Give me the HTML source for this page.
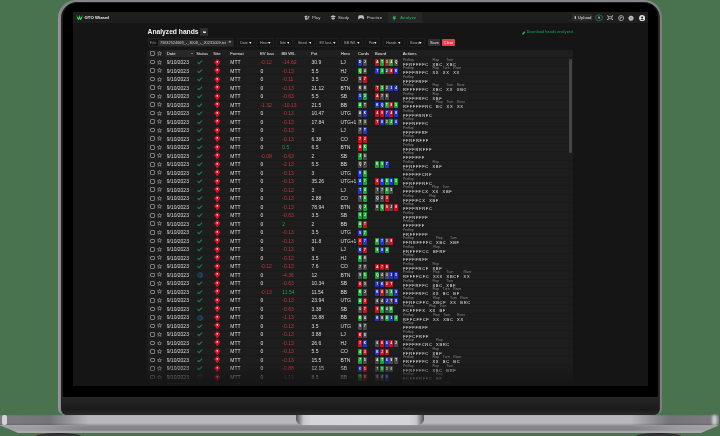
<!DOCTYPE html>
<html><head><meta charset="utf-8">
<style>
*{margin:0;padding:0;box-sizing:border-box}
html,body{width:720px;height:436px;overflow:hidden;background:#49734f;font-family:"Liberation Sans",sans-serif}
.abs{position:absolute}
#lid{position:absolute;left:58px;top:0;width:604px;height:414.8px;border-radius:18px 18px 7px 7px;background:linear-gradient(90deg,#9a9aa0,#86868a 3px,#86868a 600px,#7c7c80)}
#lid2{position:absolute;left:61px;top:1.8px;width:599.2px;height:413px;border-radius:16px 16px 6px 6px;background:linear-gradient(90deg,#242424,#1c1c1c 2px,#1c1c1c 596px,#303030)}
#lid3{position:absolute;left:62.8px;top:3.4px;width:594.9px;height:394px;border-radius:14px 14px 0 0;background:#000}
#chin{position:absolute;left:62px;top:397.2px;width:596.5px;height:17.4px;border-radius:0 0 6px 6px;background:linear-gradient(#262626,#1b1b1b 70%,#2a2a2a)}
#base{position:absolute;left:0;top:414.5px;width:719px;height:18.9px;clip-path:polygon(0 0,100% 0,100% 10.5px,699px 19.2px,20px 19.2px,0 10.5px);background:linear-gradient(#a2a2a6 0,#b6b6ba 1px,#b9b9bd 8px,#8a8a8e 11px,#828286 15px,#a6a6aa 16.5px,#a8a8ac 18.5px,#6a6a6e 19.2px)}
#baseshadeL{position:absolute;left:0;top:414.8px;width:95px;height:10.5px;background:linear-gradient(90deg,rgba(50,50,54,0.45),rgba(50,50,54,0.5) 50px,rgba(50,50,54,0) 88px)}
#baseshadeR{position:absolute;left:624px;top:414.8px;width:95px;height:10.5px;background:linear-gradient(270deg,rgba(50,50,54,0.45),rgba(50,50,54,0.5) 50px,rgba(50,50,54,0) 88px)}
#baseliteL{position:absolute;left:0;top:425px;width:90px;height:8.4px;background:linear-gradient(90deg,rgba(175,175,179,0.7),rgba(175,175,179,0.55) 40px,rgba(175,175,179,0) 85px);clip-path:polygon(0 0,100% 0,100% 100%,20px 100%,0 0.5px)}
#baseliteR{position:absolute;left:629px;top:425px;width:90px;height:8.4px;background:linear-gradient(270deg,rgba(175,175,179,0.7),rgba(175,175,179,0.55) 40px,rgba(175,175,179,0) 85px);clip-path:polygon(0 0,100% 0.5px,70px 100%,0 100%)}
#hlL{position:absolute;left:1.5px;top:415.2px;width:5.5px;height:10.2px;background:#d4d4d8;border-radius:2px;filter:blur(0.7px)}
#hlR{position:absolute;left:712.4px;top:415.2px;width:5px;height:9.5px;background:#cacace;border-radius:2px;filter:blur(0.8px)}
#notch{position:absolute;left:295.6px;top:414.5px;width:128.8px;height:10.7px;border-radius:0 0 6px 6px;background:linear-gradient(90deg,#505054,#c8c9cf 6%,#d4d5db 12%,#d6d7dd 50%,#d4d5db 88%,#c8c9cf 94%,#505054)}
#footL{position:absolute;left:36px;top:433.2px;width:45px;height:6px;background:linear-gradient(#262628,#48484a);border-radius:50%/3px}
#footR{position:absolute;left:636px;top:433.2px;width:45px;height:6px;background:linear-gradient(#262628,#48484a);border-radius:50%/3px}
#screen{position:absolute;left:73.2px;top:12.2px;width:575px;height:373.5px;background:#151515;overflow:hidden}
/* everything inside screen uses page coords minus (73.2,12.2) via wrapper */
#pg{position:absolute;left:-73.2px;top:-12.2px;width:720px;height:436px;will-change:transform;filter:blur(0.22px)}
#nav{position:absolute;left:73.2px;top:12.2px;width:575px;height:10.4px;background:#1e1e1e}
.nt{position:absolute;font-size:4.3px;color:#c8c8c8;line-height:1;white-space:nowrap}
.t{position:absolute;font-size:5px;line-height:8.5px;color:#dcdcdc;white-space:nowrap;top:0.2px}
#table{position:absolute;left:147px;top:49.5px;width:426px;height:340px;background:#1d1d1d}
#thead{position:absolute;left:147px;top:49.5px;width:426px;height:8.45px;background:#1f1f1f;border-bottom:0.5px solid #2a2a2a}
.th{position:absolute;font-size:4.2px;line-height:8.45px;color:#f0f0f0;top:0.7px;white-space:nowrap}
.row{position:absolute;left:147px;width:426px;height:8.508px}
.row:before{content:"";position:absolute;left:0;top:-0.5px;width:100%;height:1px;background:#1a1a1a}
.cb{position:absolute;left:2.9px;top:1.9px;width:4.8px;height:4.6px;border:1px solid #7e7e7e;border-radius:1px}
.st{position:absolute;left:10.2px;top:1.8px;width:5px;height:4.8px}
.dt{left:19.7px}
.ck{position:absolute;left:50px;top:2.1px;width:5.5px;height:4.6px}
.ps{position:absolute;left:66.8px;top:0.75px;width:6.6px;height:7px}
.fm{left:83.3px}
.ev{left:113.4px}
.bb{left:135.3px}
.pot{left:164.5px}
.hero{left:193.6px;letter-spacing:-0.12px}
.neg{color:#bd3a3e}
.pos{color:#1f9a5a}
.zero{color:#e6e6e6}
.cd{position:absolute;width:4.1px;height:6.6px;border-radius:0.7px;font-size:3px;line-height:6.6px;text-align:center;color:#fff;font-weight:bold}
.acts{position:absolute;left:256px;top:0.8px;height:8.5px;display:flex;gap:3.6px}
.ag{display:flex;flex-direction:column}
.al{font-size:3.4px;line-height:3.9px;color:#8a8a8a;margin-top:-0.1px}
.av{font-size:4px;line-height:4.2px;color:#f0f0f0;font-weight:normal;letter-spacing:0.68px}
.fb{position:absolute;top:38.3px;height:8.4px;border:0.5px solid #1e1e1e;border-radius:1px;white-space:nowrap}
.fb span{position:absolute;left:2.5px;top:2.8px;font-size:3.55px;line-height:1;color:#b0b0b0}
.fb svg{position:absolute;right:2.6px;top:3.0px;width:2.6px;height:1.9px}
#fade{position:absolute;left:147px;top:364px;width:426px;height:22px;background:linear-gradient(rgba(22,22,22,0),rgba(22,22,22,0.62) 12.5px,rgba(22,22,22,1) 21px)}
</style></head><body>
<div id="lid"></div><div id="lid2"></div><div id="lid3"></div><div id="chin"></div>
<div id="base"></div><div id="baseshadeL"></div><div id="baseshadeR"></div><div id="baseliteL"></div><div id="baseliteR"></div><div id="hlL"></div><div id="hlR"></div><div id="notch"></div>
<div id="footL"></div><div id="footR"></div>
<div id="screen"><div id="pg">
<div id="nav"></div>
<div class="abs" style="left:571.9px;top:14.4px;width:20px;height:6.8px;background:#2a2a2a;border-radius:1px"></div>
<div class="abs" style="left:387.8px;top:12.2px;width:34px;height:10.4px;background:#262626"></div>
<svg class="abs" style="left:75.9px;top:14.9px;width:7.2px;height:5.1px" viewBox="0 0 14 10"><path d="M1 1 L4.5 9 M13 1 L9.5 9" fill="none" stroke="#1d7050" stroke-width="2.2"/><path d="M2.8 4 L5 9 L7 3.2 L9 9 L11.2 4" fill="none" stroke="#36d05e" stroke-width="2"/></svg>
<div class="nt" style="left:84.5px;top:15.6px;font-weight:bold;color:#e8e8e8">GTO Wizard</div>


<svg class="abs" style="left:303.9px;top:15px;width:6.2px;height:5.2px" viewBox="0 0 12 10"><path d="M1 2.2 L5.6 0.8 L7.4 8.6 L2.8 9.6 Z" fill="#bdbdbd"/><path d="M7.2 1.2 L10.8 2.4 L8.6 9 L7.9 5.5 Z" fill="#9a9a9a"/><circle cx="4.3" cy="5.2" r="1" fill="#1e1e1e"/></svg>
<svg class="abs" style="left:329.7px;top:15px;width:6.3px;height:5.2px" viewBox="0 0 12 10"><path d="M6 0.5 L11.5 3 L6 5.5 L0.5 3 Z" fill="#bdbdbd"/><path d="M2.8 4.6 L2.8 7.8 Q6 10 9.2 7.8 L9.2 4.6 L6 6.2 Z" fill="#bdbdbd"/></svg>
<svg class="abs" style="left:358.3px;top:15.4px;width:6.1px;height:4.6px" viewBox="0 0 12 9"><path d="M3 0.5 H9 Q11.3 0.5 11.6 3.5 L11.8 7.2 Q11.6 8.6 10.3 8.2 L8.2 6.4 H3.8 L1.7 8.2 Q0.4 8.6 0.2 7.2 L0.4 3.5 Q0.7 0.5 3 0.5 Z" fill="#bdbdbd"/></svg>
<svg class="abs" style="left:392px;top:14.6px;width:4.8px;height:6px" viewBox="0 0 8 10"><path d="M1.5 0.5 L3.8 2.8 L6.5 1.2 L5.2 4.5 L7.2 6.2 L4.3 6.5 L3.6 9.5 L2.6 6.2 L0.5 5.2 L2.5 3.8 Z" fill="#22c55e"/><rect x="2.2" y="7.6" width="1.6" height="1.6" fill="#2b46c8"/></svg>
<svg class="abs" style="left:573.7px;top:16.2px;width:2.6px;height:3px" viewBox="0 0 4 5"><path d="M2 0 L4 2.2 H2.8 V5 H1.2 V2.2 H0 Z" fill="#e0e0e0"/></svg>
<svg class="abs" style="left:595px;top:14.1px;width:8px;height:7.6px" viewBox="0 0 16 15"><path d="M8 1 L14.3 4.3 L14.3 10.7 L8 14 L1.7 10.7 L1.7 4.3 Z" fill="none" stroke="#1f8a5a" stroke-width="1.5"/><rect x="6.9" y="5" width="2.2" height="4.2" fill="#e8e8e8"/></svg>
<svg class="abs" style="left:606.7px;top:14.9px;width:6.2px;height:5.4px" viewBox="0 0 12 10"><path d="M3 3 L9 3 L9 7 L3 7 Z M3 3 L1 1 M9 3 L11 1 M9 7 L11 9 M3 7 L1 9" fill="none" stroke="#bdbdbd" stroke-width="1.4"/><circle cx="1.5" cy="1.5" r="1.3" fill="#bdbdbd"/><circle cx="10.5" cy="1.5" r="1.3" fill="#bdbdbd"/><circle cx="10.5" cy="8.5" r="1.3" fill="#bdbdbd"/><circle cx="1.5" cy="8.5" r="1.3" fill="#bdbdbd"/></svg>
<svg class="abs" style="left:617.5px;top:14.5px;width:6.2px;height:6.2px" viewBox="0 0 12 12"><circle cx="6" cy="6" r="5" fill="none" stroke="#bdbdbd" stroke-width="1.4"/><rect x="3.6" y="3.4" width="1.6" height="5" fill="#bdbdbd"/><rect x="6.4" y="3.4" width="2" height="2.6" fill="#bdbdbd"/></svg>
<svg class="abs" style="left:628.3px;top:14.5px;width:6px;height:6.2px" viewBox="0 0 12 12"><path d="M6 0.5 L7.3 2 L9.4 1.6 L9.8 3.7 L11.6 4.8 L10.6 6.6 L11.3 8.6 L9.3 9.2 L8.6 11.2 L6.6 10.6 L6 11.6 L4.6 10.6 L2.6 11 L2.3 9 L0.4 8 L1.4 6.2 L0.6 4.2 L2.6 3.5 L3.2 1.4 L5 2 Z" fill="#bdbdbd"/><circle cx="6" cy="6" r="1.3" fill="#5a5a5a"/></svg>
<svg class="abs" style="left:638.75px;top:14.5px;width:6.3px;height:6.3px" viewBox="0 0 12 12"><circle cx="6" cy="6" r="5.8" fill="#e0e0e0"/><circle cx="6" cy="4.6" r="1.9" fill="#1e1e1e"/><path d="M2.6 9.6 Q6 5.8 9.4 9.6 Z" fill="#1e1e1e"/></svg>
<div class="nt" style="left:312px;top:15.6px">Play</div>
<div class="nt" style="left:338px;top:15.6px">Study</div>
<div class="nt" style="left:366.7px;top:15.6px">Practice</div>
<div class="nt" style="left:400px;top:15.6px;color:#1f9a58;font-weight:bold">Analyze</div>

<div class="nt" style="left:578px;top:15.7px;font-size:4px;color:#bcbcbc;font-weight:bold">Upload</div>

<div class="abs" style="left:147.6px;top:28.7px;font-size:6.7px;font-weight:bold;color:#f2f2f2;white-space:nowrap;line-height:1">Analyzed hands</div>
<div class="abs" style="left:199.9px;top:28.1px;width:8.3px;height:7.6px;background:#2e2e2e;border-radius:1.2px"></div>
<svg class="abs" style="left:202.6px;top:30.8px;width:3px;height:2.3px" viewBox="0 0 6 5"><path d="M0 0.3 H2.4 L3 1 H6 V5 H0 Z" fill="#e6e6e6"/></svg>

<div class="abs" style="left:147.6px;top:38.2px;width:86.4px;height:8.8px;border:0.5px solid #222;border-radius:1px"></div>
<div class="abs" style="left:149.8px;top:40.8px;font-size:3.9px;color:#8c8c8c;line-height:1">File</div>
<div class="abs" style="left:157.6px;top:39.6px;width:75.3px;height:6.1px;background:#2b2b2b;border-radius:1px;font-size:3.88px;line-height:6.3px;color:#cfcfcf;padding-left:2.3px;white-space:nowrap">73632524668_-_3008_-_20231009.txt</div>
<div class="abs" style="left:228.6px;top:40.3px;font-size:4.4px;line-height:1;color:#d8d8d8;font-weight:bold">&times;</div>
<div class="fb" style="left:236.7px;width:18.7px"><span>Date</span><svg viewBox="0 0 4 3"><path d="M0 0H4L2 3Z" fill="#e4e4e4"/></svg></div>
<div class="fb" style="left:256.4px;width:18px"><span>Hero</span><svg viewBox="0 0 4 3"><path d="M0 0H4L2 3Z" fill="#e4e4e4"/></svg></div>
<div class="fb" style="left:276.3px;width:16.6px"><span>Site</span><svg viewBox="0 0 4 3"><path d="M0 0H4L2 3Z" fill="#e4e4e4"/></svg></div>
<div class="fb" style="left:294.4px;width:20.6px"><span>Street</span><svg viewBox="0 0 4 3"><path d="M0 0H4L2 3Z" fill="#e4e4e4"/></svg></div>
<div class="fb" style="left:316px;width:23.4px"><span>EV loss</span><svg viewBox="0 0 4 3"><path d="M0 0H4L2 3Z" fill="#e4e4e4"/></svg></div>
<div class="fb" style="left:340.8px;width:22.6px"><span>BB W/L</span><svg viewBox="0 0 4 3"><path d="M0 0H4L2 3Z" fill="#e4e4e4"/></svg></div>
<div class="fb" style="left:365.2px;width:15.2px"><span>Pot</span><svg viewBox="0 0 4 3"><path d="M0 0H4L2 3Z" fill="#e4e4e4"/></svg></div>
<div class="fb" style="left:382.8px;width:21.8px"><span>Hands</span><svg viewBox="0 0 4 3"><path d="M0 0H4L2 3Z" fill="#e4e4e4"/></svg></div>
<div class="fb" style="left:406.8px;width:18.6px"><span>Board</span><svg viewBox="0 0 4 3"><path d="M0 0H4L2 3Z" fill="#e4e4e4"/></svg></div>
<div class="abs" style="left:428.3px;top:39.3px;width:12.2px;height:7.2px;background:#303030;border-radius:1px;font-size:3.9px;line-height:7.2px;color:#e0e0e0;text-align:center">Save</div>
<div class="abs" style="left:442px;top:39.3px;width:13px;height:7.2px;background:#e0414b;border-radius:1px;font-size:3.9px;line-height:7.2px;color:#fde;text-align:center">Clear</div>

<svg class="abs" style="left:521.6px;top:31px;width:3.6px;height:3.8px" viewBox="0 0 6 6"><path d="M3.8 0.3 L5.7 2.2 L2.2 5.7 L0.3 5.7 L0.3 3.8 Z" fill="#22b35e"/></svg>
<div class="abs" style="left:526.7px;top:31.3px;font-size:3.7px;line-height:1;color:#1b8450;font-weight:bold;white-space:nowrap">Download hands analyzed</div>

<div id="table"></div>
<div id="thead">
<div class="cb"></div>
<svg class="st" viewBox="0 0 24 23"><path d="M12 1.8 L14.8 8.3 L22 8.8 L16.5 13.4 L18.3 20.6 L12 16.7 L5.7 20.6 L7.5 13.4 L2 8.8 L9.2 8.3 Z" fill="none" stroke="#a0a0a0" stroke-width="3.2" stroke-linejoin="round"/></svg>
<div class="abs" style="left:18px;top:0;width:30px;height:8.45px;background:#282828"></div>
<div class="th" style="left:19.7px">Date</div><div class="abs" style="left:44px;top:3.9px;border-left:1px solid transparent;border-right:1px solid transparent;border-top:1.2px solid #ccc"></div>
<div class="th" style="left:49.3px">Status</div>
<div class="th" style="left:66.3px">Site</div>
<div class="th" style="left:83.3px">Format</div>
<div class="th" style="left:112.9px">EV loss</div>
<div class="th" style="left:134.4px">BB W/L</div>
<div class="th" style="left:164px">Pot</div>
<div class="th" style="left:193.8px">Hero</div>
<div class="th" style="left:211px">Cards</div>
<div class="th" style="left:228px">Board</div>
<div class="th" style="left:255.8px">Actions</div>
</div>
<div class="row" style="top:57.95px"><div class="cb"></div><svg class="st" viewBox="0 0 24 23"><path d="M12 1.8 L14.8 8.3 L22 8.8 L16.5 13.4 L18.3 20.6 L12 16.7 L5.7 20.6 L7.5 13.4 L2 8.8 L9.2 8.3 Z" fill="none" stroke="#a0a0a0" stroke-width="3.2" stroke-linejoin="round"/></svg><div class="t dt">9/10/2023</div><svg class="ck" viewBox="0 0 6 5"><path d="M0.5 2.4 L2.2 4.1 L5.5 0.6" fill="none" stroke="#1b7a50" stroke-width="1.3"/></svg><svg class="ps" viewBox="0 0 13 14"><path d="M6.5 0.2 Q9.5 3 12.6 5.6 Q13 6.4 12.2 7.2 Q9.6 9.6 7.6 13.4 Q6.5 14.2 5.4 13.4 Q3.4 9.6 0.8 7.2 Q0 6.4 0.4 5.6 Q3.5 3 6.5 0.2 Z" fill="#e3102a"/><circle cx="6.4" cy="5.6" r="1.7" fill="#f4e8ea"/></svg><div class="t fm">MTT</div><div class="t ev neg">-0.12</div><div class="t bb neg">-14.62</div><div class="t pot">30.9</div><div class="t hero">LJ</div><div class="cd" style="left:211.10px;top:1.40px;background:#2434c8">D</div><div class="cd" style="left:215.85px;top:1.40px;background:#4a4a4a">J</div><div class="cd" style="left:228.30px;top:1.40px;background:#c8141f">A</div><div class="cd" style="left:233.00px;top:1.40px;background:#17a336">T</div><div class="cd" style="left:237.70px;top:1.40px;background:#c8141f">3</div><div class="cd" style="left:242.40px;top:1.40px;background:#17a336">4</div><div class="cd" style="left:247.10px;top:1.40px;background:#4a4a4a">Q</div><div class="acts"><div class="ag"><div class="al">Preflop</div><div class="av">FFRFFFFC</div></div><div class="ag"><div class="al">Flop</div><div class="av">XBC</div></div><div class="ag"><div class="al">Turn</div><div class="av">XBC</div></div></div></div>
<div class="row" style="top:66.46px"><div class="cb"></div><svg class="st" viewBox="0 0 24 23"><path d="M12 1.8 L14.8 8.3 L22 8.8 L16.5 13.4 L18.3 20.6 L12 16.7 L5.7 20.6 L7.5 13.4 L2 8.8 L9.2 8.3 Z" fill="none" stroke="#a0a0a0" stroke-width="3.2" stroke-linejoin="round"/></svg><div class="t dt">9/10/2023</div><svg class="ck" viewBox="0 0 6 5"><path d="M0.5 2.4 L2.2 4.1 L5.5 0.6" fill="none" stroke="#1b7a50" stroke-width="1.3"/></svg><svg class="ps" viewBox="0 0 13 14"><path d="M6.5 0.2 Q9.5 3 12.6 5.6 Q13 6.4 12.2 7.2 Q9.6 9.6 7.6 13.4 Q6.5 14.2 5.4 13.4 Q3.4 9.6 0.8 7.2 Q0 6.4 0.4 5.6 Q3.5 3 6.5 0.2 Z" fill="#e3102a"/><circle cx="6.4" cy="5.6" r="1.7" fill="#f4e8ea"/></svg><div class="t fm">MTT</div><div class="t ev zero">0</div><div class="t bb neg">-0.13</div><div class="t pot">5.5</div><div class="t hero">HJ</div><div class="cd" style="left:211.10px;top:1.40px;background:#17a336">Q</div><div class="cd" style="left:215.85px;top:1.40px;background:#4a4a4a">4</div><div class="cd" style="left:228.30px;top:1.40px;background:#2434c8">T</div><div class="cd" style="left:233.00px;top:1.40px;background:#17a336">3</div><div class="cd" style="left:237.70px;top:1.40px;background:#4a4a4a">2</div><div class="cd" style="left:242.40px;top:1.40px;background:#c8141f">8</div><div class="cd" style="left:247.10px;top:1.40px;background:#2434c8">K</div><div class="acts"><div class="ag"><div class="al">Preflop</div><div class="av">FFFFRFFC</div></div><div class="ag"><div class="al">Flop</div><div class="av">XX</div></div><div class="ag"><div class="al">Turn</div><div class="av">XX</div></div><div class="ag"><div class="al">River</div><div class="av">XX</div></div></div></div>
<div class="row" style="top:74.97px"><div class="cb"></div><svg class="st" viewBox="0 0 24 23"><path d="M12 1.8 L14.8 8.3 L22 8.8 L16.5 13.4 L18.3 20.6 L12 16.7 L5.7 20.6 L7.5 13.4 L2 8.8 L9.2 8.3 Z" fill="none" stroke="#a0a0a0" stroke-width="3.2" stroke-linejoin="round"/></svg><div class="t dt">9/10/2023</div><svg class="ck" viewBox="0 0 6 5"><path d="M0.5 2.4 L2.2 4.1 L5.5 0.6" fill="none" stroke="#1b7a50" stroke-width="1.3"/></svg><svg class="ps" viewBox="0 0 13 14"><path d="M6.5 0.2 Q9.5 3 12.6 5.6 Q13 6.4 12.2 7.2 Q9.6 9.6 7.6 13.4 Q6.5 14.2 5.4 13.4 Q3.4 9.6 0.8 7.2 Q0 6.4 0.4 5.6 Q3.5 3 6.5 0.2 Z" fill="#e3102a"/><circle cx="6.4" cy="5.6" r="1.7" fill="#f4e8ea"/></svg><div class="t fm">MTT</div><div class="t ev zero">0</div><div class="t bb neg">-0.11</div><div class="t pot">3.5</div><div class="t hero">CO</div><div class="cd" style="left:211.10px;top:1.40px;background:#4a4a4a">5</div><div class="cd" style="left:215.85px;top:1.40px;background:#c8141f">7</div><div class="acts"><div class="ag"><div class="al">Preflop</div><div class="av">FFFFFRFF</div></div></div></div>
<div class="row" style="top:83.47px"><div class="cb"></div><svg class="st" viewBox="0 0 24 23"><path d="M12 1.8 L14.8 8.3 L22 8.8 L16.5 13.4 L18.3 20.6 L12 16.7 L5.7 20.6 L7.5 13.4 L2 8.8 L9.2 8.3 Z" fill="none" stroke="#a0a0a0" stroke-width="3.2" stroke-linejoin="round"/></svg><div class="t dt">9/10/2023</div><svg class="ck" viewBox="0 0 6 5"><path d="M0.5 2.4 L2.2 4.1 L5.5 0.6" fill="none" stroke="#1b7a50" stroke-width="1.3"/></svg><svg class="ps" viewBox="0 0 13 14"><path d="M6.5 0.2 Q9.5 3 12.6 5.6 Q13 6.4 12.2 7.2 Q9.6 9.6 7.6 13.4 Q6.5 14.2 5.4 13.4 Q3.4 9.6 0.8 7.2 Q0 6.4 0.4 5.6 Q3.5 3 6.5 0.2 Z" fill="#e3102a"/><circle cx="6.4" cy="5.6" r="1.7" fill="#f4e8ea"/></svg><div class="t fm">MTT</div><div class="t ev zero">0</div><div class="t bb neg">-0.13</div><div class="t pot">21.12</div><div class="t hero">BTN</div><div class="cd" style="left:211.10px;top:1.40px;background:#4a4a4a">K</div><div class="cd" style="left:215.85px;top:1.40px;background:#4a4a4a">8</div><div class="cd" style="left:228.30px;top:1.40px;background:#c8141f">T</div><div class="cd" style="left:233.00px;top:1.40px;background:#17a336">3</div><div class="cd" style="left:237.70px;top:1.40px;background:#4a4a4a">2</div><div class="cd" style="left:242.40px;top:1.40px;background:#2434c8">3</div><div class="cd" style="left:247.10px;top:1.40px;background:#2434c8">4</div><div class="acts"><div class="ag"><div class="al">Preflop</div><div class="av">RFFFFFFC</div></div><div class="ag"><div class="al">Flop</div><div class="av">XBC</div></div><div class="ag"><div class="al">Turn</div><div class="av">XX</div></div><div class="ag"><div class="al">River</div><div class="av">XBC</div></div></div></div>
<div class="row" style="top:91.98px"><div class="cb"></div><svg class="st" viewBox="0 0 24 23"><path d="M12 1.8 L14.8 8.3 L22 8.8 L16.5 13.4 L18.3 20.6 L12 16.7 L5.7 20.6 L7.5 13.4 L2 8.8 L9.2 8.3 Z" fill="none" stroke="#a0a0a0" stroke-width="3.2" stroke-linejoin="round"/></svg><div class="t dt">9/10/2023</div><svg class="ck" viewBox="0 0 6 5"><path d="M0.5 2.4 L2.2 4.1 L5.5 0.6" fill="none" stroke="#1b7a50" stroke-width="1.3"/></svg><svg class="ps" viewBox="0 0 13 14"><path d="M6.5 0.2 Q9.5 3 12.6 5.6 Q13 6.4 12.2 7.2 Q9.6 9.6 7.6 13.4 Q6.5 14.2 5.4 13.4 Q3.4 9.6 0.8 7.2 Q0 6.4 0.4 5.6 Q3.5 3 6.5 0.2 Z" fill="#e3102a"/><circle cx="6.4" cy="5.6" r="1.7" fill="#f4e8ea"/></svg><div class="t fm">MTT</div><div class="t ev zero">0</div><div class="t bb neg">-0.63</div><div class="t pot">5.5</div><div class="t hero">SB</div><div class="cd" style="left:211.10px;top:1.40px;background:#2434c8">5</div><div class="cd" style="left:215.85px;top:1.40px;background:#17a336">3</div><div class="cd" style="left:228.30px;top:1.40px;background:#c8141f">A</div><div class="cd" style="left:233.00px;top:1.40px;background:#4a4a4a">7</div><div class="cd" style="left:237.70px;top:1.40px;background:#4a4a4a">6</div><div class="acts"><div class="ag"><div class="al">Preflop</div><div class="av">FFFFFRFC</div></div><div class="ag"><div class="al">Flop</div><div class="av">XBF</div></div></div></div>
<div class="row" style="top:100.49px"><div class="cb"></div><svg class="st" viewBox="0 0 24 23"><path d="M12 1.8 L14.8 8.3 L22 8.8 L16.5 13.4 L18.3 20.6 L12 16.7 L5.7 20.6 L7.5 13.4 L2 8.8 L9.2 8.3 Z" fill="none" stroke="#a0a0a0" stroke-width="3.2" stroke-linejoin="round"/></svg><div class="t dt">9/10/2023</div><svg class="ck" viewBox="0 0 6 5"><path d="M0.5 2.4 L2.2 4.1 L5.5 0.6" fill="none" stroke="#1b7a50" stroke-width="1.3"/></svg><svg class="ps" viewBox="0 0 13 14"><path d="M6.5 0.2 Q9.5 3 12.6 5.6 Q13 6.4 12.2 7.2 Q9.6 9.6 7.6 13.4 Q6.5 14.2 5.4 13.4 Q3.4 9.6 0.8 7.2 Q0 6.4 0.4 5.6 Q3.5 3 6.5 0.2 Z" fill="#e3102a"/><circle cx="6.4" cy="5.6" r="1.7" fill="#f4e8ea"/></svg><div class="t fm">MTT</div><div class="t ev neg">-1.32</div><div class="t bb neg">-10.13</div><div class="t pot">21.5</div><div class="t hero">BB</div><div class="cd" style="left:211.10px;top:1.40px;background:#17a336">A</div><div class="cd" style="left:215.85px;top:1.40px;background:#4a4a4a">T</div><div class="cd" style="left:228.30px;top:1.40px;background:#2434c8">K</div><div class="cd" style="left:233.00px;top:1.40px;background:#2434c8">Q</div><div class="cd" style="left:237.70px;top:1.40px;background:#17a336">T</div><div class="cd" style="left:242.40px;top:1.40px;background:#c8141f">8</div><div class="cd" style="left:247.10px;top:1.40px;background:#17a336">5</div><div class="acts"><div class="ag"><div class="al">Preflop</div><div class="av">RFFFFFFRC</div></div><div class="ag"><div class="al">Flop</div><div class="av">BC</div></div><div class="ag"><div class="al">Turn</div><div class="av">XX</div></div><div class="ag"><div class="al">River</div><div class="av">XX</div></div></div></div>
<div class="row" style="top:109.00px"><div class="cb"></div><svg class="st" viewBox="0 0 24 23"><path d="M12 1.8 L14.8 8.3 L22 8.8 L16.5 13.4 L18.3 20.6 L12 16.7 L5.7 20.6 L7.5 13.4 L2 8.8 L9.2 8.3 Z" fill="none" stroke="#a0a0a0" stroke-width="3.2" stroke-linejoin="round"/></svg><div class="t dt">9/10/2023</div><svg class="ck" viewBox="0 0 6 5"><path d="M0.5 2.4 L2.2 4.1 L5.5 0.6" fill="none" stroke="#1b7a50" stroke-width="1.3"/></svg><svg class="ps" viewBox="0 0 13 14"><path d="M6.5 0.2 Q9.5 3 12.6 5.6 Q13 6.4 12.2 7.2 Q9.6 9.6 7.6 13.4 Q6.5 14.2 5.4 13.4 Q3.4 9.6 0.8 7.2 Q0 6.4 0.4 5.6 Q3.5 3 6.5 0.2 Z" fill="#e3102a"/><circle cx="6.4" cy="5.6" r="1.7" fill="#f4e8ea"/></svg><div class="t fm">MTT</div><div class="t ev zero">0</div><div class="t bb neg">-0.13</div><div class="t pot">10.47</div><div class="t hero">UTG</div><div class="cd" style="left:211.10px;top:1.40px;background:#4a4a4a">A</div><div class="cd" style="left:215.85px;top:1.40px;background:#2434c8">K</div><div class="cd" style="left:228.30px;top:1.40px;background:#c8141f">4</div><div class="cd" style="left:233.00px;top:1.40px;background:#c8141f">9</div><div class="cd" style="left:237.70px;top:1.40px;background:#2434c8">7</div><div class="cd" style="left:242.40px;top:1.40px;background:#c8141f">4</div><div class="cd" style="left:247.10px;top:1.40px;background:#2434c8">8</div><div class="acts"><div class="ag"><div class="al">Preflop</div><div class="av">FFFFFRRFC</div></div></div></div>
<div class="row" style="top:117.51px"><div class="cb"></div><svg class="st" viewBox="0 0 24 23"><path d="M12 1.8 L14.8 8.3 L22 8.8 L16.5 13.4 L18.3 20.6 L12 16.7 L5.7 20.6 L7.5 13.4 L2 8.8 L9.2 8.3 Z" fill="none" stroke="#a0a0a0" stroke-width="3.2" stroke-linejoin="round"/></svg><div class="t dt">9/10/2023</div><svg class="ck" viewBox="0 0 6 5"><path d="M0.5 2.4 L2.2 4.1 L5.5 0.6" fill="none" stroke="#1b7a50" stroke-width="1.3"/></svg><svg class="ps" viewBox="0 0 13 14"><path d="M6.5 0.2 Q9.5 3 12.6 5.6 Q13 6.4 12.2 7.2 Q9.6 9.6 7.6 13.4 Q6.5 14.2 5.4 13.4 Q3.4 9.6 0.8 7.2 Q0 6.4 0.4 5.6 Q3.5 3 6.5 0.2 Z" fill="#e3102a"/><circle cx="6.4" cy="5.6" r="1.7" fill="#f4e8ea"/></svg><div class="t fm">MTT</div><div class="t ev zero">0</div><div class="t bb neg">-0.13</div><div class="t pot">17.84</div><div class="t hero">UTG+1</div><div class="cd" style="left:211.10px;top:1.40px;background:#4a4a4a">T</div><div class="cd" style="left:215.85px;top:1.40px;background:#4a4a4a">3</div><div class="cd" style="left:228.30px;top:1.40px;background:#c8141f">T</div><div class="cd" style="left:233.00px;top:1.40px;background:#2434c8">8</div><div class="cd" style="left:237.70px;top:1.40px;background:#4a4a4a">2</div><div class="cd" style="left:242.40px;top:1.40px;background:#17a336">J</div><div class="cd" style="left:247.10px;top:1.40px;background:#2434c8">6</div><div class="acts"><div class="ag"><div class="al">Preflop</div><div class="av">FFFRFFFC</div></div></div></div>
<div class="row" style="top:126.01px"><div class="cb"></div><svg class="st" viewBox="0 0 24 23"><path d="M12 1.8 L14.8 8.3 L22 8.8 L16.5 13.4 L18.3 20.6 L12 16.7 L5.7 20.6 L7.5 13.4 L2 8.8 L9.2 8.3 Z" fill="none" stroke="#a0a0a0" stroke-width="3.2" stroke-linejoin="round"/></svg><div class="t dt">9/10/2023</div><svg class="ck" viewBox="0 0 6 5"><path d="M0.5 2.4 L2.2 4.1 L5.5 0.6" fill="none" stroke="#1b7a50" stroke-width="1.3"/></svg><svg class="ps" viewBox="0 0 13 14"><path d="M6.5 0.2 Q9.5 3 12.6 5.6 Q13 6.4 12.2 7.2 Q9.6 9.6 7.6 13.4 Q6.5 14.2 5.4 13.4 Q3.4 9.6 0.8 7.2 Q0 6.4 0.4 5.6 Q3.5 3 6.5 0.2 Z" fill="#e3102a"/><circle cx="6.4" cy="5.6" r="1.7" fill="#f4e8ea"/></svg><div class="t fm">MTT</div><div class="t ev zero">0</div><div class="t bb neg">-0.13</div><div class="t pot">3</div><div class="t hero">LJ</div><div class="cd" style="left:211.10px;top:1.40px;background:#4a4a4a">7</div><div class="cd" style="left:215.85px;top:1.40px;background:#2434c8">T</div><div class="acts"><div class="ag"><div class="al">Preflop</div><div class="av">FFFFFFRF</div></div></div></div>
<div class="row" style="top:134.52px"><div class="cb"></div><svg class="st" viewBox="0 0 24 23"><path d="M12 1.8 L14.8 8.3 L22 8.8 L16.5 13.4 L18.3 20.6 L12 16.7 L5.7 20.6 L7.5 13.4 L2 8.8 L9.2 8.3 Z" fill="none" stroke="#a0a0a0" stroke-width="3.2" stroke-linejoin="round"/></svg><div class="t dt">9/10/2023</div><svg class="ck" viewBox="0 0 6 5"><path d="M0.5 2.4 L2.2 4.1 L5.5 0.6" fill="none" stroke="#1b7a50" stroke-width="1.3"/></svg><svg class="ps" viewBox="0 0 13 14"><path d="M6.5 0.2 Q9.5 3 12.6 5.6 Q13 6.4 12.2 7.2 Q9.6 9.6 7.6 13.4 Q6.5 14.2 5.4 13.4 Q3.4 9.6 0.8 7.2 Q0 6.4 0.4 5.6 Q3.5 3 6.5 0.2 Z" fill="#e3102a"/><circle cx="6.4" cy="5.6" r="1.7" fill="#f4e8ea"/></svg><div class="t fm">MTT</div><div class="t ev zero">0</div><div class="t bb neg">-0.13</div><div class="t pot">6.38</div><div class="t hero">CO</div><div class="cd" style="left:211.10px;top:1.40px;background:#c8141f">7</div><div class="cd" style="left:215.85px;top:1.40px;background:#c8141f">2</div><div class="acts"><div class="ag"><div class="al">Preflop</div><div class="av">FFRFRFFF</div></div></div></div>
<div class="row" style="top:143.03px"><div class="cb"></div><svg class="st" viewBox="0 0 24 23"><path d="M12 1.8 L14.8 8.3 L22 8.8 L16.5 13.4 L18.3 20.6 L12 16.7 L5.7 20.6 L7.5 13.4 L2 8.8 L9.2 8.3 Z" fill="none" stroke="#a0a0a0" stroke-width="3.2" stroke-linejoin="round"/></svg><div class="t dt">9/10/2023</div><svg class="ck" viewBox="0 0 6 5"><path d="M0.5 2.4 L2.2 4.1 L5.5 0.6" fill="none" stroke="#1b7a50" stroke-width="1.3"/></svg><svg class="ps" viewBox="0 0 13 14"><path d="M6.5 0.2 Q9.5 3 12.6 5.6 Q13 6.4 12.2 7.2 Q9.6 9.6 7.6 13.4 Q6.5 14.2 5.4 13.4 Q3.4 9.6 0.8 7.2 Q0 6.4 0.4 5.6 Q3.5 3 6.5 0.2 Z" fill="#e3102a"/><circle cx="6.4" cy="5.6" r="1.7" fill="#f4e8ea"/></svg><div class="t fm">MTT</div><div class="t ev zero">0</div><div class="t bb pos">0.5</div><div class="t pot">6.5</div><div class="t hero">BTN</div><div class="cd" style="left:211.10px;top:1.40px;background:#c8141f">A</div><div class="cd" style="left:215.85px;top:1.40px;background:#17a336">K</div><div class="acts"><div class="ag"><div class="al">Preflop</div><div class="av">FFFFRRFFF</div></div></div></div>
<div class="row" style="top:151.54px"><div class="cb"></div><svg class="st" viewBox="0 0 24 23"><path d="M12 1.8 L14.8 8.3 L22 8.8 L16.5 13.4 L18.3 20.6 L12 16.7 L5.7 20.6 L7.5 13.4 L2 8.8 L9.2 8.3 Z" fill="none" stroke="#a0a0a0" stroke-width="3.2" stroke-linejoin="round"/></svg><div class="t dt">9/10/2023</div><svg class="ck" viewBox="0 0 6 5"><path d="M0.5 2.4 L2.2 4.1 L5.5 0.6" fill="none" stroke="#1b7a50" stroke-width="1.3"/></svg><svg class="ps" viewBox="0 0 13 14"><path d="M6.5 0.2 Q9.5 3 12.6 5.6 Q13 6.4 12.2 7.2 Q9.6 9.6 7.6 13.4 Q6.5 14.2 5.4 13.4 Q3.4 9.6 0.8 7.2 Q0 6.4 0.4 5.6 Q3.5 3 6.5 0.2 Z" fill="#e3102a"/><circle cx="6.4" cy="5.6" r="1.7" fill="#f4e8ea"/></svg><div class="t fm">MTT</div><div class="t ev neg">-0.08</div><div class="t bb neg">-0.63</div><div class="t pot">2</div><div class="t hero">SB</div><div class="cd" style="left:211.10px;top:1.40px;background:#17a336">J</div><div class="cd" style="left:215.85px;top:1.40px;background:#4a4a4a">6</div><div class="acts"><div class="ag"><div class="al">Preflop</div><div class="av">FFFFFFF</div></div></div></div>
<div class="row" style="top:160.05px"><div class="cb"></div><svg class="st" viewBox="0 0 24 23"><path d="M12 1.8 L14.8 8.3 L22 8.8 L16.5 13.4 L18.3 20.6 L12 16.7 L5.7 20.6 L7.5 13.4 L2 8.8 L9.2 8.3 Z" fill="none" stroke="#a0a0a0" stroke-width="3.2" stroke-linejoin="round"/></svg><div class="t dt">9/10/2023</div><svg class="ck" viewBox="0 0 6 5"><path d="M0.5 2.4 L2.2 4.1 L5.5 0.6" fill="none" stroke="#1b7a50" stroke-width="1.3"/></svg><svg class="ps" viewBox="0 0 13 14"><path d="M6.5 0.2 Q9.5 3 12.6 5.6 Q13 6.4 12.2 7.2 Q9.6 9.6 7.6 13.4 Q6.5 14.2 5.4 13.4 Q3.4 9.6 0.8 7.2 Q0 6.4 0.4 5.6 Q3.5 3 6.5 0.2 Z" fill="#e3102a"/><circle cx="6.4" cy="5.6" r="1.7" fill="#f4e8ea"/></svg><div class="t fm">MTT</div><div class="t ev zero">0</div><div class="t bb neg">-2.13</div><div class="t pot">5.5</div><div class="t hero">BB</div><div class="cd" style="left:211.10px;top:1.40px;background:#4a4a4a">Q</div><div class="cd" style="left:215.85px;top:1.40px;background:#4a4a4a">7</div><div class="cd" style="left:228.30px;top:1.40px;background:#17a336">K</div><div class="cd" style="left:233.00px;top:1.40px;background:#17a336">9</div><div class="cd" style="left:237.70px;top:1.40px;background:#2434c8">7</div><div class="acts"><div class="ag"><div class="al">Preflop</div><div class="av">FFRFFFFC</div></div><div class="ag"><div class="al">Flop</div><div class="av">XBF</div></div></div></div>
<div class="row" style="top:168.55px"><div class="cb"></div><svg class="st" viewBox="0 0 24 23"><path d="M12 1.8 L14.8 8.3 L22 8.8 L16.5 13.4 L18.3 20.6 L12 16.7 L5.7 20.6 L7.5 13.4 L2 8.8 L9.2 8.3 Z" fill="none" stroke="#a0a0a0" stroke-width="3.2" stroke-linejoin="round"/></svg><div class="t dt">9/10/2023</div><svg class="ck" viewBox="0 0 6 5"><path d="M0.5 2.4 L2.2 4.1 L5.5 0.6" fill="none" stroke="#1b7a50" stroke-width="1.3"/></svg><svg class="ps" viewBox="0 0 13 14"><path d="M6.5 0.2 Q9.5 3 12.6 5.6 Q13 6.4 12.2 7.2 Q9.6 9.6 7.6 13.4 Q6.5 14.2 5.4 13.4 Q3.4 9.6 0.8 7.2 Q0 6.4 0.4 5.6 Q3.5 3 6.5 0.2 Z" fill="#e3102a"/><circle cx="6.4" cy="5.6" r="1.7" fill="#f4e8ea"/></svg><div class="t fm">MTT</div><div class="t ev zero">0</div><div class="t bb neg">-0.13</div><div class="t pot">3</div><div class="t hero">UTG</div><div class="cd" style="left:211.10px;top:1.40px;background:#2434c8">8</div><div class="cd" style="left:215.85px;top:1.40px;background:#17a336">6</div><div class="acts"><div class="ag"><div class="al">Preflop</div><div class="av">FFFFFFCRF</div></div></div></div>
<div class="row" style="top:177.06px"><div class="cb"></div><svg class="st" viewBox="0 0 24 23"><path d="M12 1.8 L14.8 8.3 L22 8.8 L16.5 13.4 L18.3 20.6 L12 16.7 L5.7 20.6 L7.5 13.4 L2 8.8 L9.2 8.3 Z" fill="none" stroke="#a0a0a0" stroke-width="3.2" stroke-linejoin="round"/></svg><div class="t dt">9/10/2023</div><svg class="ck" viewBox="0 0 6 5"><path d="M0.5 2.4 L2.2 4.1 L5.5 0.6" fill="none" stroke="#1b7a50" stroke-width="1.3"/></svg><svg class="ps" viewBox="0 0 13 14"><path d="M6.5 0.2 Q9.5 3 12.6 5.6 Q13 6.4 12.2 7.2 Q9.6 9.6 7.6 13.4 Q6.5 14.2 5.4 13.4 Q3.4 9.6 0.8 7.2 Q0 6.4 0.4 5.6 Q3.5 3 6.5 0.2 Z" fill="#e3102a"/><circle cx="6.4" cy="5.6" r="1.7" fill="#f4e8ea"/></svg><div class="t fm">MTT</div><div class="t ev zero">0</div><div class="t bb neg">-0.13</div><div class="t pot">35.26</div><div class="t hero">UTG+1</div><div class="cd" style="left:211.10px;top:1.40px;background:#2434c8">A</div><div class="cd" style="left:215.85px;top:1.40px;background:#17a336">7</div><div class="cd" style="left:228.30px;top:1.40px;background:#c8141f">6</div><div class="cd" style="left:233.00px;top:1.40px;background:#2434c8">8</div><div class="cd" style="left:237.70px;top:1.40px;background:#17a336">8</div><div class="cd" style="left:242.40px;top:1.40px;background:#2434c8">8</div><div class="cd" style="left:247.10px;top:1.40px;background:#17a336">5</div><div class="acts"><div class="ag"><div class="al">Preflop</div><div class="av">FFRFFFRFC</div></div></div></div>
<div class="row" style="top:185.57px"><div class="cb"></div><svg class="st" viewBox="0 0 24 23"><path d="M12 1.8 L14.8 8.3 L22 8.8 L16.5 13.4 L18.3 20.6 L12 16.7 L5.7 20.6 L7.5 13.4 L2 8.8 L9.2 8.3 Z" fill="none" stroke="#a0a0a0" stroke-width="3.2" stroke-linejoin="round"/></svg><div class="t dt">9/10/2023</div><svg class="ck" viewBox="0 0 6 5"><path d="M0.5 2.4 L2.2 4.1 L5.5 0.6" fill="none" stroke="#1b7a50" stroke-width="1.3"/></svg><svg class="ps" viewBox="0 0 13 14"><path d="M6.5 0.2 Q9.5 3 12.6 5.6 Q13 6.4 12.2 7.2 Q9.6 9.6 7.6 13.4 Q6.5 14.2 5.4 13.4 Q3.4 9.6 0.8 7.2 Q0 6.4 0.4 5.6 Q3.5 3 6.5 0.2 Z" fill="#e3102a"/><circle cx="6.4" cy="5.6" r="1.7" fill="#f4e8ea"/></svg><div class="t fm">MTT</div><div class="t ev zero">0</div><div class="t bb neg">-0.12</div><div class="t pot">3</div><div class="t hero">LJ</div><div class="cd" style="left:211.10px;top:1.40px;background:#2434c8">T</div><div class="cd" style="left:215.85px;top:1.40px;background:#17a336">4</div><div class="cd" style="left:228.30px;top:1.40px;background:#4a4a4a">T</div><div class="cd" style="left:233.00px;top:1.40px;background:#4a4a4a">7</div><div class="cd" style="left:237.70px;top:1.40px;background:#17a336">6</div><div class="cd" style="left:242.40px;top:1.40px;background:#4a4a4a">5</div><div class="acts"><div class="ag"><div class="al">Preflop</div><div class="av">FFFFFFCX</div></div><div class="ag"><div class="al">Flop</div><div class="av">XX</div></div><div class="ag"><div class="al">Turn</div><div class="av">XBF</div></div></div></div>
<div class="row" style="top:194.08px"><div class="cb"></div><svg class="st" viewBox="0 0 24 23"><path d="M12 1.8 L14.8 8.3 L22 8.8 L16.5 13.4 L18.3 20.6 L12 16.7 L5.7 20.6 L7.5 13.4 L2 8.8 L9.2 8.3 Z" fill="none" stroke="#a0a0a0" stroke-width="3.2" stroke-linejoin="round"/></svg><div class="t dt">9/10/2023</div><svg class="ck" viewBox="0 0 6 5"><path d="M0.5 2.4 L2.2 4.1 L5.5 0.6" fill="none" stroke="#1b7a50" stroke-width="1.3"/></svg><svg class="ps" viewBox="0 0 13 14"><path d="M6.5 0.2 Q9.5 3 12.6 5.6 Q13 6.4 12.2 7.2 Q9.6 9.6 7.6 13.4 Q6.5 14.2 5.4 13.4 Q3.4 9.6 0.8 7.2 Q0 6.4 0.4 5.6 Q3.5 3 6.5 0.2 Z" fill="#e3102a"/><circle cx="6.4" cy="5.6" r="1.7" fill="#f4e8ea"/></svg><div class="t fm">MTT</div><div class="t ev zero">0</div><div class="t bb neg">-0.13</div><div class="t pot">2.88</div><div class="t hero">CO</div><div class="cd" style="left:211.10px;top:1.40px;background:#4a4a4a">T</div><div class="cd" style="left:215.85px;top:1.40px;background:#17a336">6</div><div class="cd" style="left:228.30px;top:1.40px;background:#4a4a4a">Q</div><div class="cd" style="left:233.00px;top:1.40px;background:#4a4a4a">2</div><div class="cd" style="left:237.70px;top:1.40px;background:#c8141f">3</div><div class="acts"><div class="ag"><div class="al">Preflop</div><div class="av">FFFFFCX</div></div><div class="ag"><div class="al">Flop</div><div class="av">XBF</div></div></div></div>
<div class="row" style="top:202.59px"><div class="cb"></div><svg class="st" viewBox="0 0 24 23"><path d="M12 1.8 L14.8 8.3 L22 8.8 L16.5 13.4 L18.3 20.6 L12 16.7 L5.7 20.6 L7.5 13.4 L2 8.8 L9.2 8.3 Z" fill="none" stroke="#a0a0a0" stroke-width="3.2" stroke-linejoin="round"/></svg><div class="t dt">9/10/2023</div><svg class="ck" viewBox="0 0 6 5"><path d="M0.5 2.4 L2.2 4.1 L5.5 0.6" fill="none" stroke="#1b7a50" stroke-width="1.3"/></svg><svg class="ps" viewBox="0 0 13 14"><path d="M6.5 0.2 Q9.5 3 12.6 5.6 Q13 6.4 12.2 7.2 Q9.6 9.6 7.6 13.4 Q6.5 14.2 5.4 13.4 Q3.4 9.6 0.8 7.2 Q0 6.4 0.4 5.6 Q3.5 3 6.5 0.2 Z" fill="#e3102a"/><circle cx="6.4" cy="5.6" r="1.7" fill="#f4e8ea"/></svg><div class="t fm">MTT</div><div class="t ev zero">0</div><div class="t bb neg">-0.13</div><div class="t pot">78.94</div><div class="t hero">BTN</div><div class="cd" style="left:211.10px;top:1.40px;background:#4a4a4a">Q</div><div class="cd" style="left:215.85px;top:1.40px;background:#17a336">J</div><div class="cd" style="left:228.30px;top:1.40px;background:#4a4a4a">K</div><div class="cd" style="left:233.00px;top:1.40px;background:#17a336">Q</div><div class="cd" style="left:237.70px;top:1.40px;background:#c8141f">9</div><div class="cd" style="left:242.40px;top:1.40px;background:#4a4a4a">J</div><div class="cd" style="left:247.10px;top:1.40px;background:#c8141f">8</div><div class="acts"><div class="ag"><div class="al">Preflop</div><div class="av">FFFFRFRFC</div></div></div></div>
<div class="row" style="top:211.09px"><div class="cb"></div><svg class="st" viewBox="0 0 24 23"><path d="M12 1.8 L14.8 8.3 L22 8.8 L16.5 13.4 L18.3 20.6 L12 16.7 L5.7 20.6 L7.5 13.4 L2 8.8 L9.2 8.3 Z" fill="none" stroke="#a0a0a0" stroke-width="3.2" stroke-linejoin="round"/></svg><div class="t dt">9/10/2023</div><svg class="ck" viewBox="0 0 6 5"><path d="M0.5 2.4 L2.2 4.1 L5.5 0.6" fill="none" stroke="#1b7a50" stroke-width="1.3"/></svg><svg class="ps" viewBox="0 0 13 14"><path d="M6.5 0.2 Q9.5 3 12.6 5.6 Q13 6.4 12.2 7.2 Q9.6 9.6 7.6 13.4 Q6.5 14.2 5.4 13.4 Q3.4 9.6 0.8 7.2 Q0 6.4 0.4 5.6 Q3.5 3 6.5 0.2 Z" fill="#e3102a"/><circle cx="6.4" cy="5.6" r="1.7" fill="#f4e8ea"/></svg><div class="t fm">MTT</div><div class="t ev zero">0</div><div class="t bb neg">-0.63</div><div class="t pot">3.5</div><div class="t hero">SB</div><div class="cd" style="left:211.10px;top:1.40px;background:#17a336">9</div><div class="cd" style="left:215.85px;top:1.40px;background:#17a336">J</div><div class="acts"><div class="ag"><div class="al">Preflop</div><div class="av">FFFRFFFF</div></div></div></div>
<div class="row" style="top:219.60px"><div class="cb"></div><svg class="st" viewBox="0 0 24 23"><path d="M12 1.8 L14.8 8.3 L22 8.8 L16.5 13.4 L18.3 20.6 L12 16.7 L5.7 20.6 L7.5 13.4 L2 8.8 L9.2 8.3 Z" fill="none" stroke="#a0a0a0" stroke-width="3.2" stroke-linejoin="round"/></svg><div class="t dt">9/10/2023</div><svg class="ck" viewBox="0 0 6 5"><path d="M0.5 2.4 L2.2 4.1 L5.5 0.6" fill="none" stroke="#1b7a50" stroke-width="1.3"/></svg><svg class="ps" viewBox="0 0 13 14"><path d="M6.5 0.2 Q9.5 3 12.6 5.6 Q13 6.4 12.2 7.2 Q9.6 9.6 7.6 13.4 Q6.5 14.2 5.4 13.4 Q3.4 9.6 0.8 7.2 Q0 6.4 0.4 5.6 Q3.5 3 6.5 0.2 Z" fill="#e3102a"/><circle cx="6.4" cy="5.6" r="1.7" fill="#f4e8ea"/></svg><div class="t fm">MTT</div><div class="t ev zero">0</div><div class="t bb pos">2</div><div class="t pot">2</div><div class="t hero">BB</div><div class="cd" style="left:211.10px;top:1.40px;background:#17a336">A</div><div class="cd" style="left:215.85px;top:1.40px;background:#c8141f">T</div><div class="acts"><div class="ag"><div class="al">Preflop</div><div class="av">FFFFFFF</div></div></div></div>
<div class="row" style="top:228.11px"><div class="cb"></div><svg class="st" viewBox="0 0 24 23"><path d="M12 1.8 L14.8 8.3 L22 8.8 L16.5 13.4 L18.3 20.6 L12 16.7 L5.7 20.6 L7.5 13.4 L2 8.8 L9.2 8.3 Z" fill="none" stroke="#a0a0a0" stroke-width="3.2" stroke-linejoin="round"/></svg><div class="t dt">9/10/2023</div><svg class="ck" viewBox="0 0 6 5"><path d="M0.5 2.4 L2.2 4.1 L5.5 0.6" fill="none" stroke="#1b7a50" stroke-width="1.3"/></svg><svg class="ps" viewBox="0 0 13 14"><path d="M6.5 0.2 Q9.5 3 12.6 5.6 Q13 6.4 12.2 7.2 Q9.6 9.6 7.6 13.4 Q6.5 14.2 5.4 13.4 Q3.4 9.6 0.8 7.2 Q0 6.4 0.4 5.6 Q3.5 3 6.5 0.2 Z" fill="#e3102a"/><circle cx="6.4" cy="5.6" r="1.7" fill="#f4e8ea"/></svg><div class="t fm">MTT</div><div class="t ev zero">0</div><div class="t bb neg">-0.13</div><div class="t pot">3.5</div><div class="t hero">UTG</div><div class="cd" style="left:211.10px;top:1.40px;background:#2434c8">9</div><div class="cd" style="left:215.85px;top:1.40px;background:#17a336">7</div><div class="acts"><div class="ag"><div class="al">Preflop</div><div class="av">FRFFFFFF</div></div></div></div>
<div class="row" style="top:236.62px"><div class="cb"></div><svg class="st" viewBox="0 0 24 23"><path d="M12 1.8 L14.8 8.3 L22 8.8 L16.5 13.4 L18.3 20.6 L12 16.7 L5.7 20.6 L7.5 13.4 L2 8.8 L9.2 8.3 Z" fill="none" stroke="#a0a0a0" stroke-width="3.2" stroke-linejoin="round"/></svg><div class="t dt">9/10/2023</div><svg class="ck" viewBox="0 0 6 5"><path d="M0.5 2.4 L2.2 4.1 L5.5 0.6" fill="none" stroke="#1b7a50" stroke-width="1.3"/></svg><svg class="ps" viewBox="0 0 13 14"><path d="M6.5 0.2 Q9.5 3 12.6 5.6 Q13 6.4 12.2 7.2 Q9.6 9.6 7.6 13.4 Q6.5 14.2 5.4 13.4 Q3.4 9.6 0.8 7.2 Q0 6.4 0.4 5.6 Q3.5 3 6.5 0.2 Z" fill="#e3102a"/><circle cx="6.4" cy="5.6" r="1.7" fill="#f4e8ea"/></svg><div class="t fm">MTT</div><div class="t ev zero">0</div><div class="t bb neg">-0.13</div><div class="t pot">31.8</div><div class="t hero">UTG+1</div><div class="cd" style="left:211.10px;top:1.40px;background:#c8141f">6</div><div class="cd" style="left:215.85px;top:1.40px;background:#2434c8">7</div><div class="cd" style="left:228.30px;top:1.40px;background:#17a336">K</div><div class="cd" style="left:233.00px;top:1.40px;background:#2434c8">7</div><div class="cd" style="left:237.70px;top:1.40px;background:#4a4a4a">2</div><div class="cd" style="left:242.40px;top:1.40px;background:#c8141f">8</div><div class="acts"><div class="ag"><div class="al">Preflop</div><div class="av">FFRRFFFFC</div></div><div class="ag"><div class="al">Flop</div><div class="av">XBC</div></div><div class="ag"><div class="al">Turn</div><div class="av">XBF</div></div></div></div>
<div class="row" style="top:245.13px"><div class="cb"></div><svg class="st" viewBox="0 0 24 23"><path d="M12 1.8 L14.8 8.3 L22 8.8 L16.5 13.4 L18.3 20.6 L12 16.7 L5.7 20.6 L7.5 13.4 L2 8.8 L9.2 8.3 Z" fill="none" stroke="#a0a0a0" stroke-width="3.2" stroke-linejoin="round"/></svg><div class="t dt">9/10/2023</div><svg class="ck" viewBox="0 0 6 5"><path d="M0.5 2.4 L2.2 4.1 L5.5 0.6" fill="none" stroke="#1b7a50" stroke-width="1.3"/></svg><svg class="ps" viewBox="0 0 13 14"><path d="M6.5 0.2 Q9.5 3 12.6 5.6 Q13 6.4 12.2 7.2 Q9.6 9.6 7.6 13.4 Q6.5 14.2 5.4 13.4 Q3.4 9.6 0.8 7.2 Q0 6.4 0.4 5.6 Q3.5 3 6.5 0.2 Z" fill="#e3102a"/><circle cx="6.4" cy="5.6" r="1.7" fill="#f4e8ea"/></svg><div class="t fm">MTT</div><div class="t ev zero">0</div><div class="t bb neg">-0.13</div><div class="t pot">9</div><div class="t hero">LJ</div><div class="cd" style="left:211.10px;top:1.40px;background:#2434c8">K</div><div class="cd" style="left:215.85px;top:1.40px;background:#c8141f">7</div><div class="cd" style="left:228.30px;top:1.40px;background:#17a336">9</div><div class="cd" style="left:233.00px;top:1.40px;background:#2434c8">8</div><div class="cd" style="left:237.70px;top:1.40px;background:#17a336">4</div><div class="acts"><div class="ag"><div class="al">Preflop</div><div class="av">FRFFFFCC</div></div><div class="ag"><div class="al">Flop</div><div class="av">BFRF</div></div></div></div>
<div class="row" style="top:253.63px"><div class="cb"></div><svg class="st" viewBox="0 0 24 23"><path d="M12 1.8 L14.8 8.3 L22 8.8 L16.5 13.4 L18.3 20.6 L12 16.7 L5.7 20.6 L7.5 13.4 L2 8.8 L9.2 8.3 Z" fill="none" stroke="#a0a0a0" stroke-width="3.2" stroke-linejoin="round"/></svg><div class="t dt">9/10/2023</div><svg class="ck" viewBox="0 0 6 5"><path d="M0.5 2.4 L2.2 4.1 L5.5 0.6" fill="none" stroke="#1b7a50" stroke-width="1.3"/></svg><svg class="ps" viewBox="0 0 13 14"><path d="M6.5 0.2 Q9.5 3 12.6 5.6 Q13 6.4 12.2 7.2 Q9.6 9.6 7.6 13.4 Q6.5 14.2 5.4 13.4 Q3.4 9.6 0.8 7.2 Q0 6.4 0.4 5.6 Q3.5 3 6.5 0.2 Z" fill="#e3102a"/><circle cx="6.4" cy="5.6" r="1.7" fill="#f4e8ea"/></svg><div class="t fm">MTT</div><div class="t ev zero">0</div><div class="t bb neg">-0.12</div><div class="t pot">3.5</div><div class="t hero">HJ</div><div class="cd" style="left:211.10px;top:1.40px;background:#17a336">K</div><div class="cd" style="left:215.85px;top:1.40px;background:#4a4a4a">8</div><div class="acts"><div class="ag"><div class="al">Preflop</div><div class="av">FFFFFRFF</div></div></div></div>
<div class="row" style="top:262.14px"><div class="cb"></div><svg class="st" viewBox="0 0 24 23"><path d="M12 1.8 L14.8 8.3 L22 8.8 L16.5 13.4 L18.3 20.6 L12 16.7 L5.7 20.6 L7.5 13.4 L2 8.8 L9.2 8.3 Z" fill="none" stroke="#a0a0a0" stroke-width="3.2" stroke-linejoin="round"/></svg><div class="t dt">9/10/2023</div><svg class="ck" viewBox="0 0 6 5"><path d="M0.5 2.4 L2.2 4.1 L5.5 0.6" fill="none" stroke="#1b7a50" stroke-width="1.3"/></svg><svg class="ps" viewBox="0 0 13 14"><path d="M6.5 0.2 Q9.5 3 12.6 5.6 Q13 6.4 12.2 7.2 Q9.6 9.6 7.6 13.4 Q6.5 14.2 5.4 13.4 Q3.4 9.6 0.8 7.2 Q0 6.4 0.4 5.6 Q3.5 3 6.5 0.2 Z" fill="#e3102a"/><circle cx="6.4" cy="5.6" r="1.7" fill="#f4e8ea"/></svg><div class="t fm">MTT</div><div class="t ev neg">-0.12</div><div class="t bb neg">-0.13</div><div class="t pot">7.6</div><div class="t hero">CO</div><div class="cd" style="left:211.10px;top:1.40px;background:#4a4a4a">7</div><div class="cd" style="left:215.85px;top:1.40px;background:#4a4a4a">7</div><div class="cd" style="left:228.30px;top:1.40px;background:#c8141f">A</div><div class="cd" style="left:233.00px;top:1.40px;background:#c8141f">7</div><div class="cd" style="left:237.70px;top:1.40px;background:#c8141f">8</div><div class="acts"><div class="ag"><div class="al">Preflop</div><div class="av">FFFFFRCF</div></div><div class="ag"><div class="al">Flop</div><div class="av">XBF</div></div></div></div>
<div class="row" style="top:270.65px"><div class="cb"></div><svg class="st" viewBox="0 0 24 23"><path d="M12 1.8 L14.8 8.3 L22 8.8 L16.5 13.4 L18.3 20.6 L12 16.7 L5.7 20.6 L7.5 13.4 L2 8.8 L9.2 8.3 Z" fill="none" stroke="#a0a0a0" stroke-width="3.2" stroke-linejoin="round"/></svg><div class="t dt">9/10/2023</div><svg class="ck" viewBox="0 0 12 12" style="top:1.4px;left:49.6px;width:6px;height:6px"><circle cx="6" cy="6" r="4.6" fill="none" stroke="#1b7a50" stroke-width="1.3"/><path d="M6 1.4 A4.6 4.6 0 0 1 6 10.6" fill="none" stroke="#2d48c8" stroke-width="1.3"/><path d="M5.2 3.6 V8.4 M7.2 3.6 V8.4" stroke="#2d48c8" stroke-width="0.9"/></svg><svg class="ps" viewBox="0 0 13 14"><path d="M6.5 0.2 Q9.5 3 12.6 5.6 Q13 6.4 12.2 7.2 Q9.6 9.6 7.6 13.4 Q6.5 14.2 5.4 13.4 Q3.4 9.6 0.8 7.2 Q0 6.4 0.4 5.6 Q3.5 3 6.5 0.2 Z" fill="#e3102a"/><circle cx="6.4" cy="5.6" r="1.7" fill="#f4e8ea"/></svg><div class="t fm">MTT</div><div class="t ev zero">0</div><div class="t bb neg">-4.36</div><div class="t pot">12</div><div class="t hero">BTN</div><div class="cd" style="left:211.10px;top:1.40px;background:#4a4a4a">9</div><div class="cd" style="left:215.85px;top:1.40px;background:#17a336">5</div><div class="cd" style="left:228.30px;top:1.40px;background:#17a336">Q</div><div class="cd" style="left:233.00px;top:1.40px;background:#4a4a4a">4</div><div class="cd" style="left:237.70px;top:1.40px;background:#4a4a4a">3</div><div class="cd" style="left:242.40px;top:1.40px;background:#2434c8">3</div><div class="cd" style="left:247.10px;top:1.40px;background:#2434c8">5</div><div class="acts"><div class="ag"><div class="al">Preflop</div><div class="av">RFFFFCFC</div></div><div class="ag"><div class="al">Flop</div><div class="av">XXX</div></div><div class="ag"><div class="al">Turn</div><div class="av">XBCF</div></div><div class="ag"><div class="al">River</div><div class="av">XX</div></div></div></div>
<div class="row" style="top:279.16px"><div class="cb"></div><svg class="st" viewBox="0 0 24 23"><path d="M12 1.8 L14.8 8.3 L22 8.8 L16.5 13.4 L18.3 20.6 L12 16.7 L5.7 20.6 L7.5 13.4 L2 8.8 L9.2 8.3 Z" fill="none" stroke="#a0a0a0" stroke-width="3.2" stroke-linejoin="round"/></svg><div class="t dt">9/10/2023</div><svg class="ck" viewBox="0 0 6 5"><path d="M0.5 2.4 L2.2 4.1 L5.5 0.6" fill="none" stroke="#1b7a50" stroke-width="1.3"/></svg><svg class="ps" viewBox="0 0 13 14"><path d="M6.5 0.2 Q9.5 3 12.6 5.6 Q13 6.4 12.2 7.2 Q9.6 9.6 7.6 13.4 Q6.5 14.2 5.4 13.4 Q3.4 9.6 0.8 7.2 Q0 6.4 0.4 5.6 Q3.5 3 6.5 0.2 Z" fill="#e3102a"/><circle cx="6.4" cy="5.6" r="1.7" fill="#f4e8ea"/></svg><div class="t fm">MTT</div><div class="t ev zero">0</div><div class="t bb neg">-0.63</div><div class="t pot">10.34</div><div class="t hero">SB</div><div class="cd" style="left:211.10px;top:1.40px;background:#c8141f">6</div><div class="cd" style="left:215.85px;top:1.40px;background:#4a4a4a">3</div><div class="cd" style="left:228.30px;top:1.40px;background:#2434c8">7</div><div class="cd" style="left:233.00px;top:1.40px;background:#2434c8">K</div><div class="cd" style="left:237.70px;top:1.40px;background:#c8141f">2</div><div class="cd" style="left:242.40px;top:1.40px;background:#c8141f">T</div><div class="acts"><div class="ag"><div class="al">Preflop</div><div class="av">FFFFRFFC</div></div><div class="ag"><div class="al">Flop</div><div class="av">XBC</div></div><div class="ag"><div class="al">Turn</div><div class="av">XBF</div></div></div></div>
<div class="row" style="top:287.67px"><div class="cb"></div><svg class="st" viewBox="0 0 24 23"><path d="M12 1.8 L14.8 8.3 L22 8.8 L16.5 13.4 L18.3 20.6 L12 16.7 L5.7 20.6 L7.5 13.4 L2 8.8 L9.2 8.3 Z" fill="none" stroke="#a0a0a0" stroke-width="3.2" stroke-linejoin="round"/></svg><div class="t dt">9/10/2023</div><svg class="ck" viewBox="0 0 6 5"><path d="M0.5 2.4 L2.2 4.1 L5.5 0.6" fill="none" stroke="#1b7a50" stroke-width="1.3"/></svg><svg class="ps" viewBox="0 0 13 14"><path d="M6.5 0.2 Q9.5 3 12.6 5.6 Q13 6.4 12.2 7.2 Q9.6 9.6 7.6 13.4 Q6.5 14.2 5.4 13.4 Q3.4 9.6 0.8 7.2 Q0 6.4 0.4 5.6 Q3.5 3 6.5 0.2 Z" fill="#e3102a"/><circle cx="6.4" cy="5.6" r="1.7" fill="#f4e8ea"/></svg><div class="t fm">MTT</div><div class="t ev neg">-0.13</div><div class="t bb pos">11.54</div><div class="t pot">11.54</div><div class="t hero">BB</div><div class="cd" style="left:211.10px;top:1.40px;background:#17a336">K</div><div class="cd" style="left:215.85px;top:1.40px;background:#4a4a4a">J</div><div class="cd" style="left:228.30px;top:1.40px;background:#2434c8">K</div><div class="cd" style="left:233.00px;top:1.40px;background:#c8141f">8</div><div class="cd" style="left:237.70px;top:1.40px;background:#4a4a4a">3</div><div class="cd" style="left:242.40px;top:1.40px;background:#17a336">2</div><div class="cd" style="left:247.10px;top:1.40px;background:#2434c8">9</div><div class="acts"><div class="ag"><div class="al">Preflop</div><div class="av">FFFFFRFC</div></div><div class="ag"><div class="al">Flop</div><div class="av">XX</div></div><div class="ag"><div class="al">Turn</div><div class="av">BC</div></div><div class="ag"><div class="al">River</div><div class="av">BF</div></div></div></div>
<div class="row" style="top:296.17px"><div class="cb"></div><svg class="st" viewBox="0 0 24 23"><path d="M12 1.8 L14.8 8.3 L22 8.8 L16.5 13.4 L18.3 20.6 L12 16.7 L5.7 20.6 L7.5 13.4 L2 8.8 L9.2 8.3 Z" fill="none" stroke="#a0a0a0" stroke-width="3.2" stroke-linejoin="round"/></svg><div class="t dt">9/10/2023</div><svg class="ck" viewBox="0 0 6 5"><path d="M0.5 2.4 L2.2 4.1 L5.5 0.6" fill="none" stroke="#1b7a50" stroke-width="1.3"/></svg><svg class="ps" viewBox="0 0 13 14"><path d="M6.5 0.2 Q9.5 3 12.6 5.6 Q13 6.4 12.2 7.2 Q9.6 9.6 7.6 13.4 Q6.5 14.2 5.4 13.4 Q3.4 9.6 0.8 7.2 Q0 6.4 0.4 5.6 Q3.5 3 6.5 0.2 Z" fill="#e3102a"/><circle cx="6.4" cy="5.6" r="1.7" fill="#f4e8ea"/></svg><div class="t fm">MTT</div><div class="t ev zero">0</div><div class="t bb neg">-0.13</div><div class="t pot">23.94</div><div class="t hero">UTG</div><div class="cd" style="left:211.10px;top:1.40px;background:#17a336">A</div><div class="cd" style="left:215.85px;top:1.40px;background:#c8141f">3</div><div class="cd" style="left:228.30px;top:1.40px;background:#4a4a4a">6</div><div class="cd" style="left:233.00px;top:1.40px;background:#4a4a4a">4</div><div class="cd" style="left:237.70px;top:1.40px;background:#2434c8">J</div><div class="cd" style="left:242.40px;top:1.40px;background:#4a4a4a">T</div><div class="cd" style="left:247.10px;top:1.40px;background:#2434c8">8</div><div class="acts"><div class="ag"><div class="al">Preflop</div><div class="av">FFRFCFFC</div></div><div class="ag"><div class="al">Flop</div><div class="av">XBCF</div></div><div class="ag"><div class="al">Turn</div><div class="av">XX</div></div><div class="ag"><div class="al">River</div><div class="av">BRC</div></div></div></div>
<div class="row" style="top:304.68px"><div class="cb"></div><svg class="st" viewBox="0 0 24 23"><path d="M12 1.8 L14.8 8.3 L22 8.8 L16.5 13.4 L18.3 20.6 L12 16.7 L5.7 20.6 L7.5 13.4 L2 8.8 L9.2 8.3 Z" fill="none" stroke="#a0a0a0" stroke-width="3.2" stroke-linejoin="round"/></svg><div class="t dt">9/10/2023</div><svg class="ck" viewBox="0 0 6 5"><path d="M0.5 2.4 L2.2 4.1 L5.5 0.6" fill="none" stroke="#1b7a50" stroke-width="1.3"/></svg><svg class="ps" viewBox="0 0 13 14"><path d="M6.5 0.2 Q9.5 3 12.6 5.6 Q13 6.4 12.2 7.2 Q9.6 9.6 7.6 13.4 Q6.5 14.2 5.4 13.4 Q3.4 9.6 0.8 7.2 Q0 6.4 0.4 5.6 Q3.5 3 6.5 0.2 Z" fill="#e3102a"/><circle cx="6.4" cy="5.6" r="1.7" fill="#f4e8ea"/></svg><div class="t fm">MTT</div><div class="t ev zero">0</div><div class="t bb neg">-0.63</div><div class="t pot">3.38</div><div class="t hero">SB</div><div class="cd" style="left:211.10px;top:1.40px;background:#4a4a4a">6</div><div class="cd" style="left:215.85px;top:1.40px;background:#c8141f">7</div><div class="cd" style="left:228.30px;top:1.40px;background:#c8141f">9</div><div class="cd" style="left:233.00px;top:1.40px;background:#17a336">9</div><div class="cd" style="left:237.70px;top:1.40px;background:#4a4a4a">4</div><div class="cd" style="left:242.40px;top:1.40px;background:#17a336">K</div><div class="acts"><div class="ag"><div class="al">Preflop</div><div class="av">FCFFFFX</div></div><div class="ag"><div class="al">Flop</div><div class="av">XX</div></div><div class="ag"><div class="al">Turn</div><div class="av">BF</div></div></div></div>
<div class="row" style="top:313.19px"><div class="cb"></div><svg class="st" viewBox="0 0 24 23"><path d="M12 1.8 L14.8 8.3 L22 8.8 L16.5 13.4 L18.3 20.6 L12 16.7 L5.7 20.6 L7.5 13.4 L2 8.8 L9.2 8.3 Z" fill="none" stroke="#a0a0a0" stroke-width="3.2" stroke-linejoin="round"/></svg><div class="t dt">9/10/2023</div><svg class="ck" viewBox="0 0 12 12" style="top:1.4px;left:49.6px;width:6px;height:6px"><circle cx="6" cy="6" r="4.6" fill="none" stroke="#1b7a50" stroke-width="1.3"/><path d="M6 1.4 A4.6 4.6 0 0 1 6 10.6" fill="none" stroke="#2d48c8" stroke-width="1.3"/><path d="M5.2 3.6 V8.4 M7.2 3.6 V8.4" stroke="#2d48c8" stroke-width="0.9"/></svg><svg class="ps" viewBox="0 0 13 14"><path d="M6.5 0.2 Q9.5 3 12.6 5.6 Q13 6.4 12.2 7.2 Q9.6 9.6 7.6 13.4 Q6.5 14.2 5.4 13.4 Q3.4 9.6 0.8 7.2 Q0 6.4 0.4 5.6 Q3.5 3 6.5 0.2 Z" fill="#e3102a"/><circle cx="6.4" cy="5.6" r="1.7" fill="#f4e8ea"/></svg><div class="t fm">MTT</div><div class="t ev zero">0</div><div class="t bb neg">-1.13</div><div class="t pot">15.88</div><div class="t hero">BB</div><div class="cd" style="left:211.10px;top:1.40px;background:#17a336">K</div><div class="cd" style="left:215.85px;top:1.40px;background:#4a4a4a">4</div><div class="cd" style="left:228.30px;top:1.40px;background:#2434c8">K</div><div class="cd" style="left:233.00px;top:1.40px;background:#4a4a4a">8</div><div class="cd" style="left:237.70px;top:1.40px;background:#17a336">8</div><div class="cd" style="left:242.40px;top:1.40px;background:#2434c8">3</div><div class="cd" style="left:247.10px;top:1.40px;background:#17a336">3</div><div class="acts"><div class="ag"><div class="al">Preflop</div><div class="av">RFFCFFCF</div></div><div class="ag"><div class="al">Flop</div><div class="av">XX</div></div><div class="ag"><div class="al">Turn</div><div class="av">XBC</div></div><div class="ag"><div class="al">River</div><div class="av">XX</div></div></div></div>
<div class="row" style="top:321.70px"><div class="cb"></div><svg class="st" viewBox="0 0 24 23"><path d="M12 1.8 L14.8 8.3 L22 8.8 L16.5 13.4 L18.3 20.6 L12 16.7 L5.7 20.6 L7.5 13.4 L2 8.8 L9.2 8.3 Z" fill="none" stroke="#a0a0a0" stroke-width="3.2" stroke-linejoin="round"/></svg><div class="t dt">9/10/2023</div><svg class="ck" viewBox="0 0 6 5"><path d="M0.5 2.4 L2.2 4.1 L5.5 0.6" fill="none" stroke="#1b7a50" stroke-width="1.3"/></svg><svg class="ps" viewBox="0 0 13 14"><path d="M6.5 0.2 Q9.5 3 12.6 5.6 Q13 6.4 12.2 7.2 Q9.6 9.6 7.6 13.4 Q6.5 14.2 5.4 13.4 Q3.4 9.6 0.8 7.2 Q0 6.4 0.4 5.6 Q3.5 3 6.5 0.2 Z" fill="#e3102a"/><circle cx="6.4" cy="5.6" r="1.7" fill="#f4e8ea"/></svg><div class="t fm">MTT</div><div class="t ev zero">0</div><div class="t bb neg">-0.13</div><div class="t pot">3.5</div><div class="t hero">UTG</div><div class="cd" style="left:211.10px;top:1.40px;background:#4a4a4a">9</div><div class="cd" style="left:215.85px;top:1.40px;background:#4a4a4a">7</div><div class="acts"><div class="ag"><div class="al">Preflop</div><div class="av">FFFFFRFF</div></div></div></div>
<div class="row" style="top:330.21px"><div class="cb"></div><svg class="st" viewBox="0 0 24 23"><path d="M12 1.8 L14.8 8.3 L22 8.8 L16.5 13.4 L18.3 20.6 L12 16.7 L5.7 20.6 L7.5 13.4 L2 8.8 L9.2 8.3 Z" fill="none" stroke="#a0a0a0" stroke-width="3.2" stroke-linejoin="round"/></svg><div class="t dt">9/10/2023</div><svg class="ck" viewBox="0 0 6 5"><path d="M0.5 2.4 L2.2 4.1 L5.5 0.6" fill="none" stroke="#1b7a50" stroke-width="1.3"/></svg><svg class="ps" viewBox="0 0 13 14"><path d="M6.5 0.2 Q9.5 3 12.6 5.6 Q13 6.4 12.2 7.2 Q9.6 9.6 7.6 13.4 Q6.5 14.2 5.4 13.4 Q3.4 9.6 0.8 7.2 Q0 6.4 0.4 5.6 Q3.5 3 6.5 0.2 Z" fill="#e3102a"/><circle cx="6.4" cy="5.6" r="1.7" fill="#f4e8ea"/></svg><div class="t fm">MTT</div><div class="t ev zero">0</div><div class="t bb neg">-0.13</div><div class="t pot">3.88</div><div class="t hero">LJ</div><div class="cd" style="left:211.10px;top:1.40px;background:#c8141f">K</div><div class="cd" style="left:215.85px;top:1.40px;background:#4a4a4a">8</div><div class="acts"><div class="ag"><div class="al">Preflop</div><div class="av">FFFCFRFF</div></div></div></div>
<div class="row" style="top:338.71px"><div class="cb"></div><svg class="st" viewBox="0 0 24 23"><path d="M12 1.8 L14.8 8.3 L22 8.8 L16.5 13.4 L18.3 20.6 L12 16.7 L5.7 20.6 L7.5 13.4 L2 8.8 L9.2 8.3 Z" fill="none" stroke="#a0a0a0" stroke-width="3.2" stroke-linejoin="round"/></svg><div class="t dt">9/10/2023</div><svg class="ck" viewBox="0 0 6 5"><path d="M0.5 2.4 L2.2 4.1 L5.5 0.6" fill="none" stroke="#1b7a50" stroke-width="1.3"/></svg><svg class="ps" viewBox="0 0 13 14"><path d="M6.5 0.2 Q9.5 3 12.6 5.6 Q13 6.4 12.2 7.2 Q9.6 9.6 7.6 13.4 Q6.5 14.2 5.4 13.4 Q3.4 9.6 0.8 7.2 Q0 6.4 0.4 5.6 Q3.5 3 6.5 0.2 Z" fill="#e3102a"/><circle cx="6.4" cy="5.6" r="1.7" fill="#f4e8ea"/></svg><div class="t fm">MTT</div><div class="t ev zero">0</div><div class="t bb neg">-0.13</div><div class="t pot">26.6</div><div class="t hero">HJ</div><div class="cd" style="left:211.10px;top:1.40px;background:#c8141f">7</div><div class="cd" style="left:215.85px;top:1.40px;background:#2434c8">K</div><div class="cd" style="left:228.30px;top:1.40px;background:#4a4a4a">6</div><div class="cd" style="left:233.00px;top:1.40px;background:#c8141f">6</div><div class="cd" style="left:237.70px;top:1.40px;background:#2434c8">6</div><div class="cd" style="left:242.40px;top:1.40px;background:#c8141f">4</div><div class="cd" style="left:247.10px;top:1.40px;background:#4a4a4a">2</div><div class="acts"><div class="ag"><div class="al">Preflop</div><div class="av">FFFFFFCRC</div></div><div class="ag"><div class="al">Flop</div><div class="av">XBRC</div></div></div></div>
<div class="row" style="top:347.22px"><div class="cb"></div><svg class="st" viewBox="0 0 24 23"><path d="M12 1.8 L14.8 8.3 L22 8.8 L16.5 13.4 L18.3 20.6 L12 16.7 L5.7 20.6 L7.5 13.4 L2 8.8 L9.2 8.3 Z" fill="none" stroke="#a0a0a0" stroke-width="3.2" stroke-linejoin="round"/></svg><div class="t dt">9/10/2023</div><svg class="ck" viewBox="0 0 6 5"><path d="M0.5 2.4 L2.2 4.1 L5.5 0.6" fill="none" stroke="#1b7a50" stroke-width="1.3"/></svg><svg class="ps" viewBox="0 0 13 14"><path d="M6.5 0.2 Q9.5 3 12.6 5.6 Q13 6.4 12.2 7.2 Q9.6 9.6 7.6 13.4 Q6.5 14.2 5.4 13.4 Q3.4 9.6 0.8 7.2 Q0 6.4 0.4 5.6 Q3.5 3 6.5 0.2 Z" fill="#e3102a"/><circle cx="6.4" cy="5.6" r="1.7" fill="#f4e8ea"/></svg><div class="t fm">MTT</div><div class="t ev zero">0</div><div class="t bb neg">-0.13</div><div class="t pot">5.5</div><div class="t hero">CO</div><div class="cd" style="left:211.10px;top:1.40px;background:#17a336">4</div><div class="cd" style="left:215.85px;top:1.40px;background:#c8141f">3</div><div class="cd" style="left:228.30px;top:1.40px;background:#2434c8">K</div><div class="cd" style="left:233.00px;top:1.40px;background:#c8141f">J</div><div class="cd" style="left:237.70px;top:1.40px;background:#c8141f">8</div><div class="acts"><div class="ag"><div class="al">Preflop</div><div class="av">FFRFFFFC</div></div><div class="ag"><div class="al">Flop</div><div class="av">XBF</div></div></div></div>
<div class="row" style="top:355.73px"><div class="cb"></div><svg class="st" viewBox="0 0 24 23"><path d="M12 1.8 L14.8 8.3 L22 8.8 L16.5 13.4 L18.3 20.6 L12 16.7 L5.7 20.6 L7.5 13.4 L2 8.8 L9.2 8.3 Z" fill="none" stroke="#a0a0a0" stroke-width="3.2" stroke-linejoin="round"/></svg><div class="t dt">9/10/2023</div><svg class="ck" viewBox="0 0 6 5"><path d="M0.5 2.4 L2.2 4.1 L5.5 0.6" fill="none" stroke="#1b7a50" stroke-width="1.3"/></svg><svg class="ps" viewBox="0 0 13 14"><path d="M6.5 0.2 Q9.5 3 12.6 5.6 Q13 6.4 12.2 7.2 Q9.6 9.6 7.6 13.4 Q6.5 14.2 5.4 13.4 Q3.4 9.6 0.8 7.2 Q0 6.4 0.4 5.6 Q3.5 3 6.5 0.2 Z" fill="#e3102a"/><circle cx="6.4" cy="5.6" r="1.7" fill="#f4e8ea"/></svg><div class="t fm">MTT</div><div class="t ev zero">0</div><div class="t bb neg">-0.13</div><div class="t pot">15.5</div><div class="t hero">BTN</div><div class="cd" style="left:211.10px;top:1.40px;background:#17a336">7</div><div class="cd" style="left:215.85px;top:1.40px;background:#4a4a4a">5</div><div class="cd" style="left:228.30px;top:1.40px;background:#4a4a4a">A</div><div class="cd" style="left:233.00px;top:1.40px;background:#17a336">T</div><div class="cd" style="left:237.70px;top:1.40px;background:#2434c8">6</div><div class="cd" style="left:242.40px;top:1.40px;background:#4a4a4a">9</div><div class="cd" style="left:247.10px;top:1.40px;background:#4a4a4a">T</div><div class="acts"><div class="ag"><div class="al">Preflop</div><div class="av">FRFFFFFC</div></div><div class="ag"><div class="al">Flop</div><div class="av">XX</div></div><div class="ag"><div class="al">Turn</div><div class="av">BC</div></div><div class="ag"><div class="al">River</div><div class="av">BC</div></div></div></div>
<div class="row" style="top:364.24px"><div class="cb"></div><svg class="st" viewBox="0 0 24 23"><path d="M12 1.8 L14.8 8.3 L22 8.8 L16.5 13.4 L18.3 20.6 L12 16.7 L5.7 20.6 L7.5 13.4 L2 8.8 L9.2 8.3 Z" fill="none" stroke="#a0a0a0" stroke-width="3.2" stroke-linejoin="round"/></svg><div class="t dt">9/10/2023</div><svg class="ck" viewBox="0 0 6 5"><path d="M0.5 2.4 L2.2 4.1 L5.5 0.6" fill="none" stroke="#1b7a50" stroke-width="1.3"/></svg><svg class="ps" viewBox="0 0 13 14"><path d="M6.5 0.2 Q9.5 3 12.6 5.6 Q13 6.4 12.2 7.2 Q9.6 9.6 7.6 13.4 Q6.5 14.2 5.4 13.4 Q3.4 9.6 0.8 7.2 Q0 6.4 0.4 5.6 Q3.5 3 6.5 0.2 Z" fill="#e3102a"/><circle cx="6.4" cy="5.6" r="1.7" fill="#f4e8ea"/></svg><div class="t fm">MTT</div><div class="t ev zero">0</div><div class="t bb neg">-0.88</div><div class="t pot">12.15</div><div class="t hero">SB</div><div class="cd" style="left:211.10px;top:1.40px;background:#2434c8">K</div><div class="cd" style="left:215.85px;top:1.40px;background:#c8141f">5</div><div class="cd" style="left:228.30px;top:1.40px;background:#4a4a4a">7</div><div class="cd" style="left:233.00px;top:1.40px;background:#17a336">5</div><div class="cd" style="left:237.70px;top:1.40px;background:#4a4a4a">3</div><div class="cd" style="left:242.40px;top:1.40px;background:#4a4a4a">6</div><div class="acts"><div class="ag"><div class="al">Preflop</div><div class="av">FFRFFFFC</div></div><div class="ag"><div class="al">Flop</div><div class="av">XBC</div></div><div class="ag"><div class="al">Turn</div><div class="av">BRF</div></div></div></div>
<div class="row" style="top:372.75px"><div class="cb"></div><svg class="st" viewBox="0 0 24 23"><path d="M12 1.8 L14.8 8.3 L22 8.8 L16.5 13.4 L18.3 20.6 L12 16.7 L5.7 20.6 L7.5 13.4 L2 8.8 L9.2 8.3 Z" fill="none" stroke="#a0a0a0" stroke-width="3.2" stroke-linejoin="round"/></svg><div class="t dt">9/10/2023</div><svg class="ck" viewBox="0 0 12 12" style="top:1.4px;left:49.6px;width:6px;height:6px"><circle cx="6" cy="6" r="4.6" fill="none" stroke="#6a6a6a" stroke-width="1"/><path d="M6 3.2 V6.4" stroke="#6a6a6a" stroke-width="1"/></svg><svg class="ps" viewBox="0 0 13 14"><path d="M6.5 0.2 Q9.5 3 12.6 5.6 Q13 6.4 12.2 7.2 Q9.6 9.6 7.6 13.4 Q6.5 14.2 5.4 13.4 Q3.4 9.6 0.8 7.2 Q0 6.4 0.4 5.6 Q3.5 3 6.5 0.2 Z" fill="#e3102a"/><circle cx="6.4" cy="5.6" r="1.7" fill="#f4e8ea"/></svg><div class="t fm">MTT</div><div class="t ev zero">0</div><div class="t bb neg">-1.13</div><div class="t pot">8.5</div><div class="t hero">BB</div><div class="cd" style="left:211.10px;top:1.40px;background:#17a336">7</div><div class="cd" style="left:215.85px;top:1.40px;background:#c8141f">8</div><div class="cd" style="left:228.30px;top:1.40px;background:#4a4a4a">6</div><div class="cd" style="left:233.00px;top:1.40px;background:#4a4a4a">4</div><div class="cd" style="left:237.70px;top:1.40px;background:#2434c8">6</div><div class="acts"><div class="ag"><div class="al">Preflop</div><div class="av">FCFFFRFFC</div></div><div class="ag"><div class="al">Flop</div><div class="av">BF</div></div></div></div>
<div class="row" style="top:381.25px"><div class="cb"></div><svg class="st" viewBox="0 0 24 23"><path d="M12 1.8 L14.8 8.3 L22 8.8 L16.5 13.4 L18.3 20.6 L12 16.7 L5.7 20.6 L7.5 13.4 L2 8.8 L9.2 8.3 Z" fill="none" stroke="#a0a0a0" stroke-width="3.2" stroke-linejoin="round"/></svg><div class="t dt">9/10/2023</div><svg class="ck" viewBox="0 0 6 5"><path d="M0.5 2.4 L2.2 4.1 L5.5 0.6" fill="none" stroke="#1b7a50" stroke-width="1.3"/></svg><svg class="ps" viewBox="0 0 13 14"><path d="M6.5 0.2 Q9.5 3 12.6 5.6 Q13 6.4 12.2 7.2 Q9.6 9.6 7.6 13.4 Q6.5 14.2 5.4 13.4 Q3.4 9.6 0.8 7.2 Q0 6.4 0.4 5.6 Q3.5 3 6.5 0.2 Z" fill="#e3102a"/><circle cx="6.4" cy="5.6" r="1.7" fill="#f4e8ea"/></svg><div class="t fm">MTT</div><div class="t ev zero">0</div><div class="t bb neg">-0.13</div><div class="t pot">4.5</div><div class="t hero">UTG</div><div class="cd" style="left:211.10px;top:1.40px;background:#4a4a4a">9</div><div class="cd" style="left:215.85px;top:1.40px;background:#4a4a4a">7</div><div class="acts"><div class="ag"><div class="al">Preflop</div><div class="av">FFFFFRFF</div></div><div class="ag"><div class="al">Flop</div><div class="av">XX</div></div><div class="ag"><div class="al">River</div><div class="av">XX</div></div></div></div>
<div class="abs" style="left:569.3px;top:58.6px;width:2.7px;height:94.8px;background:#444;border-radius:1.3px"></div>
<div id="fade"></div>
</div></div>
</body></html>
